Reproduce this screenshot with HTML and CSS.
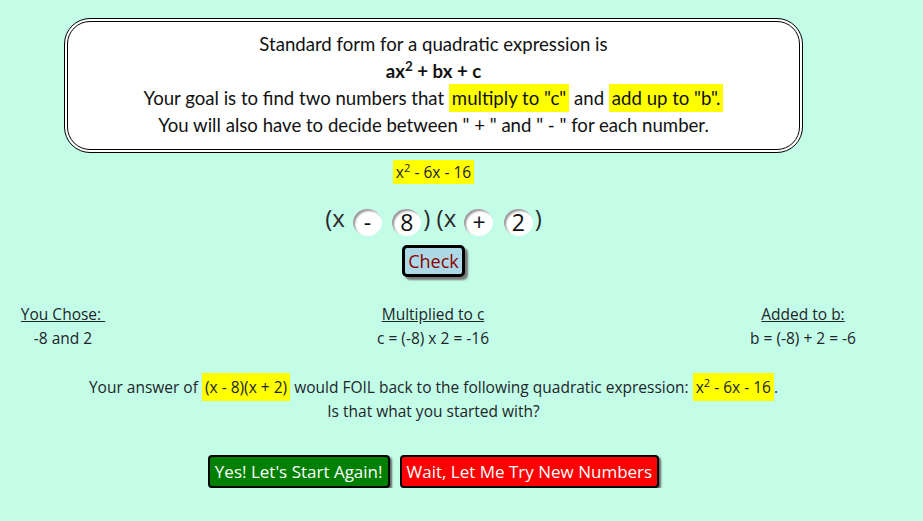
FILE: index.html
```html
<!DOCTYPE html>
<html lang="en">
<head>
<meta charset="utf-8">
<title>Factoring Quadratics</title>
<link rel="stylesheet" href="styles.css">
</head>
<body>
<main class="page">
  <section class="intro">
    <p>Standard form for a quadratic expression is</p>
    <p class="std">ax<sup>2</sup> + bx + c</p>
    <p>Your goal is to find two numbers that <span class="hl">multiply to "c"</span> and <span class="hl">add up to "b".</span></p>
    <p>You will also have to decide between " + " and " - " for each number.</p>
  </section>

  <div class="problem"><span class="hl eq">x<sup>2</sup> - 6x - 16</span></div>

  <div class="factor">(x <input class="slot" type="text" value="-"> <input class="slot" type="text" value="8">) (x <input class="slot" type="text" value="+"> <input class="slot" type="text" value="2">)</div>

  <div class="check-row"><button class="check" type="button">Check</button></div>

  <div class="results">
    <div class="col">
      <div class="head">You Chose:&nbsp;</div>
      <div>-8 and 2</div>
    </div>
    <div class="col">
      <div class="head">Multiplied to c</div>
      <div>c = (-8) x 2 = -16</div>
    </div>
    <div class="col">
      <div class="head">Added to b:</div>
      <div>b = (-8) + 2 = -6</div>
    </div>
  </div>

  <div class="foil">
    <p>Your answer of <span class="hl">(x - 8)(x + 2)</span> would FOIL back to the following quadratic expression: <span class="hl">x<sup>2</sup> - 6x - 16</span>.</p>
    <p>Is that what you started with?</p>
  </div>

  <div class="actions">
    <button class="btn yes" type="button">Yes! Let's Start Again!</button>
    <button class="btn no" type="button">Wait, Let Me Try New Numbers</button>
  </div>
</main>
</body>
</html>
```
FILE: styles.css
```css
html, body {
  margin: 0;
  padding: 0;
  background: #c3fde8;
}
body {
  font-family: "Open Sans", "Noto Sans", sans-serif;
  font-size: 15.5px;
  color: #212529;
}
p { margin: 0; }
sup { font-size: 0.72em; line-height: 0; vertical-align: 0.5em; }

.page {
  width: 867px;
  padding-top: 18px;
  display: flex;
  flex-direction: column;
  align-items: center;
}

.intro {
  width: 739px;
  box-sizing: border-box;
  background: #fff;
  border: 4px double #000;
  border-radius: 26px;
  padding: 9px 10px 10px;
  text-align: center;
  font-family: Lato, "Noto Sans", sans-serif;
  font-size: 18.6px;
  line-height: 27px;
  color: #111;
}
.intro .std { font-weight: bold; }

.hl {
  background: #ffff00;
  padding: 3px 3px;
}

.problem {
  margin-top: 7px;
  height: 24px;
  color: #222;
}
.problem .eq { padding: 2px 3px; display: inline-block; line-height: 20px; }

.factor {
  margin-top: 19px;
  font-size: 24px;
  line-height: 30px;
  height: 30px;
  color: #2a2a2a;
  white-space: nowrap;
}
.slot {
  width: 29px;
  height: 27px;
  box-sizing: border-box;
  border: none;
  border-radius: 50%;
  background: #fff;
  box-shadow: inset 2px 2px 2px #999;
  text-align: center;
  font-family: "Open Sans", "Noto Sans", sans-serif;
  font-size: 23px;
  line-height: 27px;
  padding: 0;
  margin: 0 2px;
  vertical-align: -4px;
  color: #111;
}

.check-row { margin-top: 12px; }
.check {
  font-family: "Open Sans", "Noto Sans", sans-serif;
  font-size: 18px;
  color: #8b0000;
  background: #add8e6;
  border: 3px solid #000;
  border-radius: 5px;
  box-shadow: 3px 3px 2px #777;
  padding: 0 3px;
  height: 32px;
  line-height: 24px;
}

.results {
  margin-top: 25px;
  align-self: stretch;
  display: grid;
  grid-template-columns: 126px 614px 126px;
  text-align: center;
  line-height: 24px;
  white-space: nowrap;
}
.results .col { display: flex; flex-direction: column; align-items: center; }
.results .head { text-decoration: underline; }

.foil {
  margin-top: 25px;
  text-align: center;
  line-height: 24px;
}

.actions {
  margin-top: 32px;
  display: flex;
  gap: 10px;
}
.btn {
  font-family: "Open Sans", "Noto Sans", sans-serif;
  font-size: 17px;
  color: #fff;
  border: 2px solid #000;
  border-radius: 4px;
  box-shadow: 2px 2px 2px #666;
  height: 33px;
  padding: 0 5px;
}
.yes { background: #008000; }
.no { background: #ff0000; }
```
